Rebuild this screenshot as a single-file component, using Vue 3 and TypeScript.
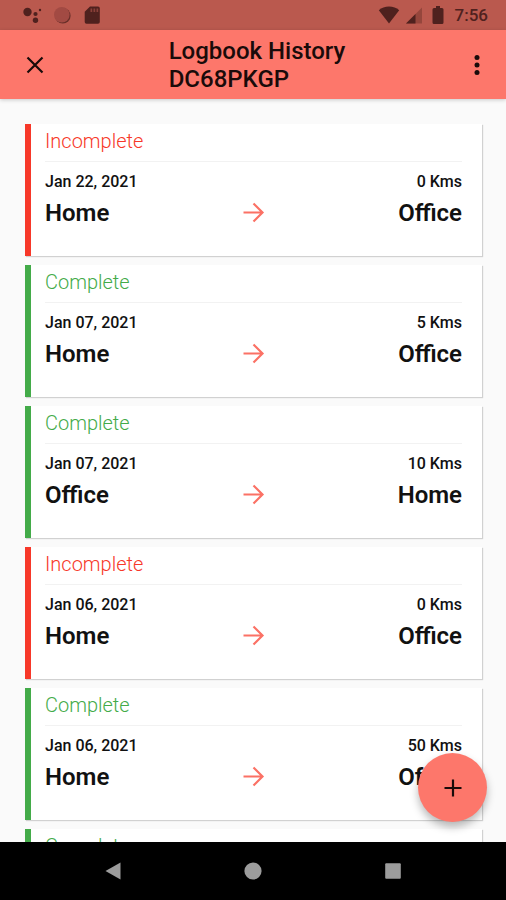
<script setup lang="ts">
interface Trip {
  id: number
  status: 'Incomplete' | 'Complete'
  date: string
  distance: number
  from: string
  to: string
}

const trips: Trip[] = [
  { id: 1, status: 'Incomplete', date: 'Jan 22, 2021', distance: 0, from: 'Home', to: 'Office' },
  { id: 2, status: 'Complete', date: 'Jan 07, 2021', distance: 5, from: 'Home', to: 'Office' },
  { id: 3, status: 'Complete', date: 'Jan 07, 2021', distance: 10, from: 'Office', to: 'Home' },
  { id: 4, status: 'Incomplete', date: 'Jan 06, 2021', distance: 0, from: 'Home', to: 'Office' },
  { id: 5, status: 'Complete', date: 'Jan 06, 2021', distance: 50, from: 'Home', to: 'Office' },
  { id: 6, status: 'Complete', date: 'Jan 06, 2021', distance: 50, from: 'Office', to: 'Home' },
]
</script>

<template>
  <div class="screen">
    <div class="status-bar">
      <div class="status-group">
        <svg class="status-icon" viewBox="0 0 20 20" aria-hidden="true">
          <circle cx="5.500" cy="7" r="4.200" /><circle cx="13.500" cy="9" r="2.100" />
          <circle cx="18" cy="5" r="1.200" /><circle cx="13.500" cy="15.300" r="2.700" />
        </svg>
        <svg class="status-icon" viewBox="0 0 20 20" aria-hidden="true">
          <circle cx="10.800" cy="10.800" r="7.800" opacity=".75" />
          <circle class="disc" cx="9.800" cy="9.800" r="7.800" />
        </svg>
        <svg class="status-icon" viewBox="0 0 20 20" aria-hidden="true">
          <path d="M8 1.500h8a1.800 1.800 0 0 1 1.800 1.800v13.600a1.800 1.800 0 0 1-1.800 1.800H4.500a1.800 1.800 0 0 1-1.800-1.800V6.800z" />
          <path class="contacts" d="M8.500 3.500h1.700v3.500H8.500zM11.500 3.500h1.700v3.500h-1.700zM14.500 3.500h1.700v3.500h-1.700z" />
        </svg>
      </div>
      <div class="status-group right">
        <svg class="status-icon wifi" viewBox="0 0 22 20" aria-hidden="true">
          <path d="M11 18.500 .8 5.200Q5 1.600 11 1.600T21.200 5.200z" />
        </svg>
        <svg class="status-icon" viewBox="0 0 20 20" aria-hidden="true">
          <path d="M18 2.500v16H2z" opacity=".35" /><path d="M11.500 9v9.500H2z" />
        </svg>
        <svg class="status-icon" viewBox="0 0 20 20" aria-hidden="true">
          <path d="M8 1h4v2h2a1.500 1.500 0 0 1 1.500 1.500v13A1.500 1.500 0 0 1 14 19H6a1.500 1.500 0 0 1-1.500-1.500v-13A1.500 1.500 0 0 1 6 3h2z" />
        </svg>
        <time class="clock">7:56</time>
      </div>
    </div>

    <header class="app-bar">
      <button class="icon-button" type="button" aria-label="Close">
        <svg viewBox="0 0 24 24" width="24" height="24" aria-hidden="true">
          <path d="M4.500 4.500l15 15M19.500 4.500l-15 15" fill="none" stroke="currentColor" stroke-width="2.200" />
        </svg>
      </button>
      <h1 class="title">Logbook History<br />DC68PKGP</h1>
      <button class="icon-button more" type="button" aria-label="More options">
        <svg viewBox="0 0 24 24" width="24" height="24" aria-hidden="true">
          <circle cx="12" cy="4.500" r="2.500" /><circle cx="12" cy="12" r="2.500" /><circle cx="12" cy="19.500" r="2.500" />
        </svg>
      </button>
    </header>

    <main class="content">
      <ul class="trips">
        <li v-for="trip in trips" :key="trip.id" class="trip" :class="trip.status.toLowerCase()">
          <p class="trip-status">{{ trip.status }}</p>
          <div class="trip-meta">
            <span>{{ trip.date }}</span>
            <span>{{ trip.distance }} Kms</span>
          </div>
          <div class="trip-route">
            <span>{{ trip.from }}</span>
            <svg class="arrow" viewBox="0 0 24 24" aria-hidden="true">
              <path d="M1.500 11.500h18.500M11.500 2.500l9 9-9 9" />
            </svg>
            <span class="destination">{{ trip.to }}</span>
          </div>
        </li>
      </ul>
    </main>

    <nav class="system-nav" aria-label="System">
      <button class="add-button" type="button" aria-label="Add trip">
        <svg viewBox="0 0 24 24" width="24" height="24" aria-hidden="true">
          <path d="M12 3.500v17M3.500 12h17" fill="none" stroke="currentColor" stroke-width="2.200" />
        </svg>
      </button>
      <button class="nav-button" type="button" aria-label="Back">
        <svg viewBox="0 0 20 20" width="20" height="20" aria-hidden="true"><path d="M2.500 10 17.500 1.500v17z" /></svg>
      </button>
      <button class="nav-button" type="button" aria-label="Home">
        <svg viewBox="0 0 20 20" width="20" height="20" aria-hidden="true"><circle cx="10" cy="10" r="8.600" /></svg>
      </button>
      <button class="nav-button" type="button" aria-label="Recent apps">
        <svg viewBox="0 0 20 20" width="20" height="20" aria-hidden="true"><rect x="2.200" y="2.200" width="15.600" height="15.600" rx="1" /></svg>
      </button>
    </nav>
  </div>
</template>

<style>
body {
  margin: 0;
}
</style>

<style scoped>
.screen {
  display: flex;
  flex-direction: column;
  height: 100vh;
  overflow: hidden;
  background: #fafafa;
  color: #111;
  font-family: Roboto, "Liberation Sans", sans-serif;
}

button {
  display: grid;
  place-items: center;
  padding: 0;
  border: 0;
  background: none;
  color: inherit;
  cursor: pointer;
}

svg {
  display: block;
  fill: currentColor;
}

.status-bar {
  display: flex;
  flex: none;
  justify-content: space-between;
  height: 30px;
  padding: 0 18px 0 22px;
  background: #ba594e;
  color: #4f211e;
}

.status-group {
  display: flex;
  align-items: center;
  gap: 10px;
}

.status-group.right {
  gap: 4px;
}

.status-icon {
  width: 20px;
  height: 20px;
}

.status-icon.wifi {
  width: 22px;
}

.disc {
  fill: #a24a43;
}

.contacts {
  fill: #8a4039;
}

.clock {
  margin-left: 3px;
  font-size: 17px;
  font-weight: 500;
  line-height: 32px;
}

.app-bar {
  z-index: 1;
  display: grid;
  flex: none;
  grid-template-columns: repeat(3, minmax(0, 1fr));
  align-items: center;
  height: 69px;
  background: #fd776b;
  box-shadow: 0 1px 4px rgba(0, 0, 0, 0.2);
  color: #1a0b0a;
}

.icon-button {
  width: 48px;
  height: 48px;
  margin-left: 11px;
}

.icon-button.more {
  justify-self: end;
  margin-right: 5px;
}

.title {
  margin: 0;
  font-size: 24px;
  font-weight: 500;
  line-height: 28px;
  white-space: nowrap;
}

.content {
  flex: 1;
  min-height: 0;
  padding: 25px 24px 0 25px;
  overflow: auto;
  scrollbar-width: none;
}

.trips {
  display: flex;
  flex-direction: column;
  gap: 9px;
  margin: 0;
  padding: 0;
  list-style: none;
}

.trip {
  box-sizing: border-box;
  height: 132px;
  padding: 0 20px 0 14px;
  border-left: 6px solid var(--accent);
  background: #fff;
  box-shadow: 1px 1px 1px rgba(0, 0, 0, 0.16);
}

.trip.incomplete {
  --accent: #f73829;
}

.trip.complete {
  --accent: #43ab49;
}

.trip-status {
  margin: 0;
  padding: 4px 0 6px;
  border-bottom: 1px solid #f2f2f2;
  color: var(--accent);
  font-size: 20px;
  font-weight: 300;
  line-height: 27px;
}

.trip-meta {
  display: flex;
  justify-content: space-between;
  padding-top: 10px;
  font-size: 16px;
  font-weight: 500;
  line-height: 20px;
}

.trip-route {
  display: grid;
  grid-template-columns: 1fr auto 1fr;
  align-items: center;
  padding-top: 6px;
  font-size: 24px;
  font-weight: 600;
  line-height: 30px;
}

.arrow {
  width: 24px;
  height: 24px;
  fill: none;
  stroke: #fb7165;
  stroke-width: 2.2;
}

.destination {
  text-align: right;
}

.system-nav {
  position: relative;
  z-index: 1;
  display: flex;
  flex: none;
  justify-content: center;
  align-items: center;
  gap: 92px;
  height: 58px;
  background: #000;
  color: #9c9c9c;
}

.nav-button {
  width: 48px;
  height: 48px;
}

.add-button {
  position: absolute;
  right: 19px;
  bottom: 78px;
  width: 69px;
  height: 69px;
  border-radius: 50%;
  background: #fd776b;
  box-shadow: 0 5px 9px rgba(0, 0, 0, 0.28);
  color: #1a0b0a;
}
</style>
